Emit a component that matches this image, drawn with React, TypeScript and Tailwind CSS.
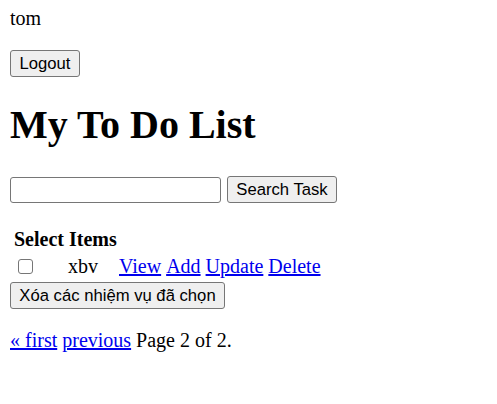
const links = ["View", "Add", "Update", "Delete"]

const btn =
  "h-[27px] px-[7px] border border-[#767676] rounded-[3px] bg-[#efefef] text-[16.67px] leading-[19px] text-black [font-family:'Liberation_Sans',Arial,sans-serif]"

const App = () => {
  return (
    <div className="min-h-[404px] bg-white pl-[10px] pt-[7px] text-[20px] leading-[23px] text-black [font-family:'Liberation_Serif','Times_New_Roman',serif]">
      <div>tom</div>

      <button className={`${btn} mt-[20px] block w-[70px]`}>Logout</button>

      <h1 className="mt-[24.5px] text-[40px] leading-[46px] font-bold">My To Do List</h1>

      <div className="mt-[28.5px] flex items-center gap-[6px]">
        <input
          type="text"
          className="h-[26px] w-[211px] border border-[#767676] rounded-[3px] bg-white px-1 text-[16px]"
        />
        <button className={`${btn} h-[26px] w-[110px]`}>Search Task</button>
      </div>

      <div className="mt-[25px] pl-[4px] font-bold">Select Items</div>
      <div className="mt-[4px] flex items-center h-[23px]">
        <span className="ml-[8px] w-[15px] h-[15px] border border-[#767676] rounded-[3px] bg-white" />
        <span className="ml-[35px]">xbv</span>
        <span className="ml-[21px] flex gap-[5px]">
          {links.map(l => (
            <a key={l} href="#" className="text-[#0000ee] underline">{l}</a>
          ))}
        </span>
      </div>

      <button className={`${btn} mt-[4px] block h-[26px] w-[215px]`}>Xóa các nhiệm vụ đã chọn</button>

      <div className="mt-[20px]">
        <a href="#" className="text-[#0000ee] underline">« first</a>{" "}
        <a href="#" className="text-[#0000ee] underline">previous</a> Page 2 of 2.
      </div>
    </div>
  )
}

export default App
